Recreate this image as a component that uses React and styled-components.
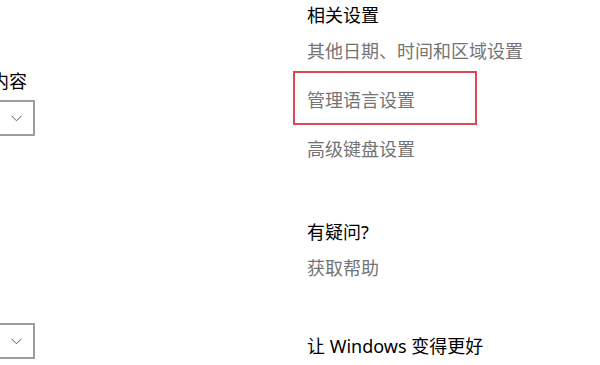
import React from 'react';
import styled, { createGlobalStyle } from 'styled-components';

const GlobalStyle = createGlobalStyle`
  html, body {
    margin: 0;
    padding: 0;
    background: #ffffff;
    overflow: hidden;
  }
  body {
    font-family: 'Noto Sans', 'Noto Sans CJK SC', sans-serif;
    font-size: 18px;
    color: #000;
  }
`;

const Page = styled.div`
  width: 600px;
  height: 365px;
  display: flex;
  flex-direction: row;
  gap: 272px;
  overflow: hidden;
`;

const LeftColumn = styled.div`
  flex: 0 0 260px;
  margin-left: -225px;
  display: flex;
  flex-direction: column;
`;

const FieldLabel = styled.div`
  line-height: 24px;
  white-space: nowrap;
  margin-top: ${(p) => p.top}px;
`;

const Dropdown = styled.div`
  box-sizing: border-box;
  width: 260px;
  height: 36px;
  margin-top: 7px;
  border: 2px solid #9d9d9d;
  background: #fff;
  display: flex;
  align-items: center;
  justify-content: flex-end;
  padding-right: 11px;
`;

const RightColumn = styled.div`
  flex: 1;
  display: flex;
  flex-direction: column;
  padding-top: 3px;
`;

const Section = styled.section`
  display: flex;
  flex-direction: column;
  align-items: flex-start;
  margin-top: ${(p) => p.space || 0}px;
`;

const Heading = styled.div`
  line-height: 24px;
  color: #000;
  white-space: nowrap;
`;

const LinkList = styled.div`
  display: flex;
  flex-direction: column;
  align-items: flex-start;
  gap: 25px;
  margin-top: 12px;
`;

const Link = styled.a`
  position: relative;
  line-height: 24px;
  color: #747474;
  text-decoration: none;
  white-space: nowrap;
  cursor: pointer;

  ${(p) =>
    p.highlight &&
    `
    &::after {
      content: '';
      position: absolute;
      top: -17px;
      bottom: -13px;
      left: -14px;
      right: -62px;
      border: 2px solid #de4650;
      pointer-events: none;
    }
  `}
`;

function Chevron() {
  return (
    <svg width="11" height="7" viewBox="0 0 11 7" fill="none">
      <polyline points="0.5,0.8 5.5,5.8 10.5,0.8" stroke="#5a5a5a" strokeWidth="1" />
    </svg>
  );
}

export default function App() {
  return (
    <>
      <GlobalStyle />
      <Page>
        <LeftColumn>
          <FieldLabel top={69}>选择要在开始菜单上显示的内容</FieldLabel>
          <Dropdown>
            <Chevron />
          </Dropdown>
          <FieldLabel top={156}>区域格式</FieldLabel>
          <Dropdown>
            <Chevron />
          </Dropdown>
        </LeftColumn>

        <RightColumn>
          <Section>
            <Heading>相关设置</Heading>
            <LinkList>
              <Link>其他日期、时间和区域设置</Link>
              <Link highlight>管理语言设置</Link>
              <Link>高级键盘设置</Link>
            </LinkList>
          </Section>

          <Section space={59}>
            <Heading>有疑问?</Heading>
            <LinkList>
              <Link>获取帮助</Link>
            </LinkList>
          </Section>

          <Section space={54}>
            <Heading>让 Windows 变得更好</Heading>
          </Section>
        </RightColumn>
      </Page>
    </>
  );
}
